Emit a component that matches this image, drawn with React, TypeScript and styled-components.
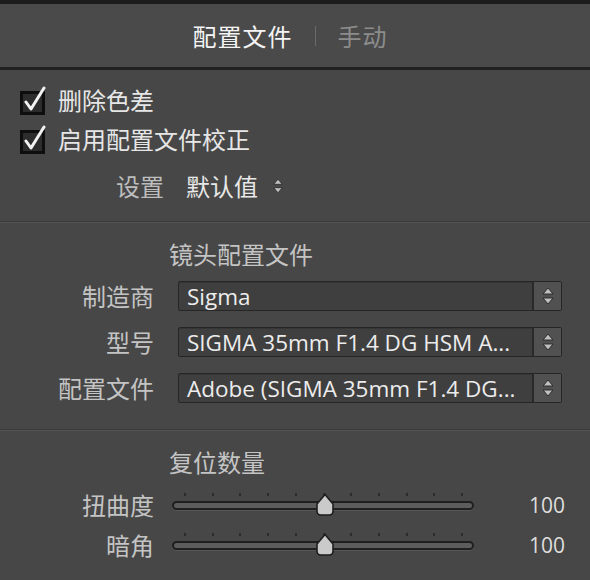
import * as React from "react";
import styled, { createGlobalStyle } from "styled-components";

const GlobalStyle = createGlobalStyle`
  html, body {
    margin: 0;
    padding: 0;
    background: #474747;
  }
  body {
    font-family: "Noto Sans CJK SC", "Noto Sans", sans-serif;
  }
`;

const Panel = styled.div`
  width: 590px;
  height: 580px;
  background: #474747;
  border-top: 4px solid #1c1c1c;
  box-sizing: border-box;
  overflow: hidden;
  color: #cfcfcf;
`;

const Header = styled.div`
  height: 63px;
  background: #4a4a4a;
  border-bottom: 3px solid #202020;
  display: flex;
  align-items: center;
  justify-content: center;
  gap: 22px;
  padding-right: 10px;
  font-size: 24px;
`;

const Tab = styled.span<{ $active?: boolean }>`
  color: ${(p) => (p.$active ? "#f4f4f4" : "#8c8c8c")};
  letter-spacing: 1px;
`;

const TabDivider = styled.span`
  width: 1px;
  height: 20px;
  background: #6a6a6a;
`;

const Section = styled.div<{ $top: number; $bottom: number; $last?: boolean }>`
  padding: ${(p) => p.$top}px 28px ${(p) => p.$bottom}px 0;
  border-bottom: ${(p) => (p.$last ? "none" : "1px solid #3b3b3b")};
  box-shadow: ${(p) => (p.$last ? "none" : "0 1px 0 #525252")};
  display: flex;
  flex-direction: column;
`;

const CheckRow = styled.label`
  height: 39px;
  display: flex;
  align-items: center;
  gap: 12px;
  padding-left: 20px;
  font-size: 24px;
  color: #e6e6e6;
`;

const SetupRow = styled.div`
  height: 39px;
  margin-top: 8px;
  display: flex;
  align-items: center;
  padding-left: 116px;
  font-size: 24px;
`;

const SetupLabel = styled.span`
  color: #bdbdbd;
  margin-right: 22px;
`;

const SetupValue = styled.span`
  color: #e8e8e8;
  margin-right: 14px;
`;

const Title = styled.div`
  height: 30px;
  line-height: 30px;
  padding-left: 169px;
  font-size: 24px;
  color: #c4c4c4;
`;

const FormGrid = styled.div`
  display: grid;
  grid-template-columns: 154px 1fr;
  column-gap: 24px;
  row-gap: 16px;
  margin-top: 12px;
  align-items: center;
`;

const RowLabel = styled.span`
  text-align: right;
  font-size: 24px;
  color: #c4c4c4;
  line-height: 30px;
`;

const Select = styled.div`
  height: 30px;
  display: flex;
  align-items: center;
  border: 1px solid #262626;
  border-radius: 2px;
  box-sizing: border-box;
  background: #3f3f3f;
  box-shadow: inset 0 1px 0 #363636;
`;

const SelectText = styled.span`
  flex: 1;
  min-width: 0;
  padding-left: 8px;
  font-family: "Open Sans", "Noto Sans", sans-serif;
  font-size: 22.5px;
  line-height: 31px;
  color: #ececec;
  white-space: nowrap;
`;

const SelectButton = styled.span`
  align-self: stretch;
  width: 27px;
  border-left: 2px solid #2a2a2a;
  background: #515151;
  display: flex;
  align-items: center;
  justify-content: center;
`;

const SliderGrid = styled.div`
  display: grid;
  grid-template-columns: 154px 302px 1fr;
  column-gap: 18px;
  margin-top: 8px;
`;

const SliderLabel = styled.span`
  text-align: right;
  font-size: 24px;
  color: #c4c4c4;
  line-height: 40px;
`;

const Track = styled.div`
  position: relative;
  height: 40px;
`;

const Rail = styled.div`
  position: absolute;
  left: 0;
  right: 0;
  top: 16px;
  height: 9px;
  border-radius: 5px;
  background: #5c5c5c;
  border: 2px solid #1f1f1f;
  box-sizing: border-box;
  box-shadow: 0 1px 0 #555;
`;

const Tick = styled.span`
  position: absolute;
  top: 8px;
  width: 2px;
  height: 3px;
  background: #2c2c2c;
`;

const Thumb = styled.svg`
  position: absolute;
  top: 8px;
  left: 141px;
`;

const SliderValue = styled.span`
  text-align: right;
  font-family: "Open Sans", "Noto Sans", sans-serif;
  font-size: 21px;
  line-height: 40px;
  color: #dedede;
  padding-right: 25px;
  margin-right: -28px;
`;

function CheckBox() {
  return (
    <svg width="26" height="30" viewBox="0 0 26 30">
      <rect x="1.5" y="7.5" width="22" height="21" fill="#2c2c2c" stroke="#0e0e0e" strokeWidth="3" />
      <path d="M6 17 L11 24 L24 3" fill="none" stroke="#f2f2f2" strokeWidth="3" strokeLinecap="round" strokeLinejoin="round" />
    </svg>
  );
}

function UpDown({ size = 14 }: { size?: number }) {
  return (
    <svg width={size} height={size + 6} viewBox="0 0 14 20">
      <path d="M2 8 L7 2 L12 8 Z" fill="#c0c0c0" stroke="#2c2c2c" strokeWidth="1" />
      <path d="M2 12 L7 18 L12 12 Z" fill="#c0c0c0" stroke="#2c2c2c" strokeWidth="1" />
    </svg>
  );
}

function Dropdown({ value }: { value: string }) {
  return (
    <Select>
      <SelectText>{value}</SelectText>
      <SelectButton>
        <UpDown />
      </SelectButton>
    </Select>
  );
}

const ticks = Array.from({ length: 11 }, (_, i) => 12 + i * 27.7);

function Slider({ label, value }: { label: string; value: number }) {
  return (
    <>
      <SliderLabel>{label}</SliderLabel>
      <Track>
        {ticks.map((x) => (
          <Tick key={x} style={{ left: x }} />
        ))}
        <Rail />
        <Thumb width="24" height="24" viewBox="0 0 24 24">
          <path d="M12 1.5 L20 11 L20 18 Q20 22 16 22 L8 22 Q4 22 4 18 L4 11 Z" fill="#cacaca" stroke="#1e1e1e" strokeWidth="1.6" />
        </Thumb>
      </Track>
      <SliderValue>{value}</SliderValue>
    </>
  );
}

export default function App() {
  return (
    <>
      <GlobalStyle />
      <Panel>
        <Header>
          <Tab $active>配置文件</Tab>
          <TabDivider />
          <Tab>手动</Tab>
        </Header>

        <Section $top={10} $bottom={16}>
          <CheckRow>
            <CheckBox />
            删除色差
          </CheckRow>
          <CheckRow>
            <CheckBox />
            启用配置文件校正
          </CheckRow>
          <SetupRow>
            <SetupLabel>设置</SetupLabel>
            <SetupValue>默认值</SetupValue>
            <UpDown size={12} />
          </SetupRow>
        </Section>

        <Section $top={17} $bottom={26}>
          <Title>镜头配置文件</Title>
          <FormGrid>
            <RowLabel>制造商</RowLabel>
            <Dropdown value="Sigma" />
            <RowLabel>型号</RowLabel>
            <Dropdown value="SIGMA 35mm F1.4 DG HSM A..." />
            <RowLabel>配置文件</RowLabel>
            <Dropdown value="Adobe (SIGMA 35mm F1.4 DG..." />
          </FormGrid>
        </Section>

        <Section $top={17} $bottom={0} $last>
          <Title>复位数量</Title>
          <SliderGrid>
            <Slider label="扭曲度" value={100} />
            <Slider label="暗角" value={100} />
          </SliderGrid>
        </Section>
      </Panel>
    </>
  );
}
